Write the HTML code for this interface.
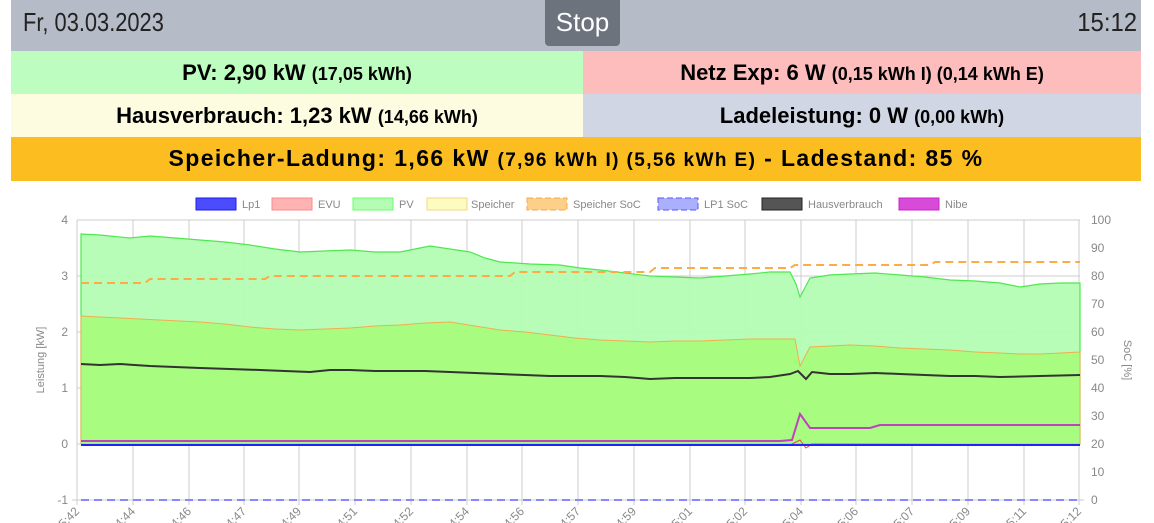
<!DOCTYPE html>
<html><head><meta charset="utf-8"><style>
body{margin:0;width:1154px;height:523px;background:#fff;font-family:"Liberation Sans",sans-serif;overflow:hidden;position:relative}
.bar{position:absolute;left:11px;width:1130px}
.top{top:0;height:51px;background:#b6bbc8}
.date{position:absolute;left:12px;top:7px;font-size:26px;color:#222;transform:scaleX(.84);transform-origin:left}
.time{position:absolute;right:4px;top:7px;font-size:26px;color:#222;transform:scaleX(.92);transform-origin:right}
.stop{position:absolute;left:534px;top:0;width:75px;height:46px;background:#6c737d;border-radius:0 0 4px 4px;color:#fff;font-size:26px;line-height:44px;text-align:center}
.cell{position:absolute;height:43px;line-height:43px;text-align:center;font-weight:bold;font-size:22px;color:#000;white-space:nowrap}
.cell span{font-size:18px}
.big{font-size:23px;letter-spacing:1.4px}
.big span{font-size:19px}
</style></head><body>
<div class="bar top"><div class="date">Fr, 03.03.2023</div><div class="stop">Stop</div><div class="time">15:12</div></div>
<div class="cell" style="left:11px;width:572px;top:51px;background:#bdfdbf">PV: 2,90 kW <span>(17,05 kWh)</span></div>
<div class="cell" style="left:583px;width:558px;top:51px;background:#fdbdbd">Netz Exp: 6 W <span>(0,15 kWh I) (0,14 kWh E)</span></div>
<div class="cell" style="left:11px;width:572px;top:94px;background:#fefce0">Hausverbrauch: 1,23 kW <span>(14,66 kWh)</span></div>
<div class="cell" style="left:583px;width:558px;top:94px;background:#d0d6e3">Ladeleistung: 0 W <span>(0,00 kWh)</span></div>
<div class="cell big" style="left:11px;width:1130px;top:137px;height:44px;background:#fbbd20">Speicher-Ladung: 1,66 kW <span>(7,96 kWh I) (5,56 kWh E)</span> - Ladestand: 85 %</div>
<svg style="position:absolute;left:0;top:190px" width="1154" height="333" viewBox="0 190 1154 333" font-family="Liberation Sans" font-size="11" fill="#888">
<g font-size="11">
<rect x="196" y="198" width="40" height="12" fill="#4a4cfd" stroke="#1c1cf0"/><text x="242" y="208">Lp1</text>
<rect x="272" y="198" width="40" height="12" fill="#ffb3b3" stroke="#f88"/><text x="318" y="208">EVU</text>
<rect x="353" y="198" width="40" height="12" fill="#b5fdb5" stroke="#6f6"/><text x="399" y="208">PV</text>
<rect x="427" y="198" width="40" height="12" fill="#fdfcc0" stroke="#f5d58a"/><text x="471" y="208">Speicher</text>
<rect x="527" y="198" width="40" height="12" fill="#fdd08a" stroke="#f9a84a" stroke-dasharray="6,3"/><text x="573" y="208">Speicher SoC</text>
<rect x="658" y="198" width="40" height="12" fill="#aab0fd" stroke="#55f" stroke-dasharray="6,3"/><text x="704" y="208">LP1 SoC</text>
<rect x="762" y="198" width="40" height="12" fill="#555" stroke="#222"/><text x="808" y="208">Hausverbrauch</text>
<rect x="899" y="198" width="40" height="12" fill="#d84ad8" stroke="#c2c"/><text x="945" y="208">Nibe</text>
</g>
<g stroke="#ccc" stroke-width="1">
<line x1="77" y1="220" x2="1080" y2="220"/><line x1="77" y1="276" x2="1080" y2="276"/><line x1="77" y1="332" x2="1080" y2="332"/><line x1="77" y1="388" x2="1080" y2="388"/><line x1="77" y1="444" x2="1080" y2="444"/><line x1="72" y1="500" x2="1084" y2="500"/>
<line x1="77" y1="220" x2="77" y2="505"/><line x1="133" y1="220" x2="133" y2="505"/><line x1="189" y1="220" x2="189" y2="505"/><line x1="244" y1="220" x2="244" y2="505"/><line x1="299" y1="220" x2="299" y2="505"/><line x1="355" y1="220" x2="355" y2="505"/><line x1="411" y1="220" x2="411" y2="505"/><line x1="467" y1="220" x2="467" y2="505"/><line x1="522" y1="220" x2="522" y2="505"/><line x1="578" y1="220" x2="578" y2="505"/><line x1="634" y1="220" x2="634" y2="505"/><line x1="690" y1="220" x2="690" y2="505"/><line x1="745" y1="220" x2="745" y2="505"/><line x1="801" y1="220" x2="801" y2="505"/><line x1="856" y1="220" x2="856" y2="505"/><line x1="912" y1="220" x2="912" y2="505"/><line x1="968" y1="220" x2="968" y2="505"/><line x1="1024" y1="220" x2="1024" y2="505"/><line x1="1079" y1="220" x2="1079" y2="505"/>
</g>
<polygon fill="#b3fdb3" fill-opacity=".95" stroke="#4ee84e" stroke-width="1.2" points="81,234 100,235 130,238 150,236 175,238 200,240 225,242 250,245 275,249 300,252 325,251 350,250 375,252 400,252 430,246 450,249 470,252 485,258 500,262 530,264 560,265 580,268 600,270 625,273 650,276 675,277 700,278 725,276 750,274 770,272 790,272 796,284 800,297 810,278 830,275 850,274 875,273 900,275 925,277 950,280 975,281 1000,283 1020,287 1040,284 1060,283 1080,283 1080,444 81,444"/>
<polygon fill="#a8fc80" stroke="#f0ae50" stroke-width="1" points="81,316 100,317 120,318 160,320 200,322 225,324 250,327 275,329 300,330 325,329 350,328 375,326 400,325 425,323 450,322 475,326 500,330 525,332 550,335 575,338 600,340 625,341 650,342 675,341 700,341 725,340 750,339 775,339 795,339 800,366 810,347 830,346 850,345 875,346 900,348 925,349 950,350 975,352 1000,353 1020,354 1040,354 1060,353 1080,352 1080,444 81,444"/>
<polyline fill="none" stroke="#333" stroke-width="2" points="81,364 100,365 120,364 150,366 175,367 200,368 230,369 260,370 285,371 310,372 330,370 350,370 375,371 400,371 425,371 450,372 475,373 500,374 525,375 550,376 575,376 600,376 625,377 650,379 675,378 700,378 725,378 750,378 770,377 790,374 798,371 806,379 812,372 830,374 850,374 875,373 900,374 925,375 950,376 975,376 1000,377 1040,376 1080,375"/>
<polyline fill="none" stroke="#c040c0" stroke-width="2" points="81,441 780,441 792,440 800,414 810,428 870,428 880,425 1080,425"/>
<polyline fill="none" stroke="#e43" stroke-width="1" points="81,445 790,445 800,440 806,448 812,444 1080,445"/>
<line x1="81" y1="445" x2="1080" y2="445" stroke="#22f" stroke-width="2"/>
<polyline fill="none" stroke="#ffaa44" stroke-width="2" stroke-dasharray="8,5" points="81,283 145,283 150,279 265,279 270,276 510,276 515,272 650,272 655,268 790,268 795,265 930,265 935,262 1080,262"/>
<line x1="81" y1="500" x2="1080" y2="500" stroke="#88f" stroke-width="2" stroke-dasharray="8,5"/>
<g text-anchor="end" font-size="12"><text x="68" y="224">4</text><text x="68" y="280">3</text><text x="68" y="336">2</text><text x="68" y="392">1</text><text x="68" y="448">0</text><text x="68" y="504">-1</text></g>
<g font-size="12"><text x="1091" y="224">100</text><text x="1091" y="252">90</text><text x="1091" y="280">80</text><text x="1091" y="308">70</text><text x="1091" y="336">60</text><text x="1091" y="364">50</text><text x="1091" y="392">40</text><text x="1091" y="420">30</text><text x="1091" y="448">20</text><text x="1091" y="476">10</text><text x="1091" y="504">0</text></g>
<text transform="translate(44,360) rotate(-90)" text-anchor="middle" font-size="11">Leistung [kW]</text>
<text transform="translate(1124,360) rotate(90)" text-anchor="middle" font-size="11">SoC [%]</text>
<g font-size="12" text-anchor="end">
<text transform="translate(80,512) rotate(-45)">15:42</text><text transform="translate(136,512) rotate(-45)">14:44</text><text transform="translate(192,512) rotate(-45)">14:46</text><text transform="translate(247,512) rotate(-45)">14:47</text><text transform="translate(302,512) rotate(-45)">14:49</text><text transform="translate(358,512) rotate(-45)">14:51</text><text transform="translate(414,512) rotate(-45)">14:52</text><text transform="translate(470,512) rotate(-45)">14:54</text><text transform="translate(525,512) rotate(-45)">14:56</text><text transform="translate(581,512) rotate(-45)">14:57</text><text transform="translate(637,512) rotate(-45)">14:59</text><text transform="translate(693,512) rotate(-45)">15:01</text><text transform="translate(748,512) rotate(-45)">15:02</text><text transform="translate(804,512) rotate(-45)">15:04</text><text transform="translate(859,512) rotate(-45)">15:06</text><text transform="translate(915,512) rotate(-45)">15:07</text><text transform="translate(971,512) rotate(-45)">15:09</text><text transform="translate(1027,512) rotate(-45)">15:11</text><text transform="translate(1082,512) rotate(-45)">15:12</text>
</g>
</svg>
</body></html>
